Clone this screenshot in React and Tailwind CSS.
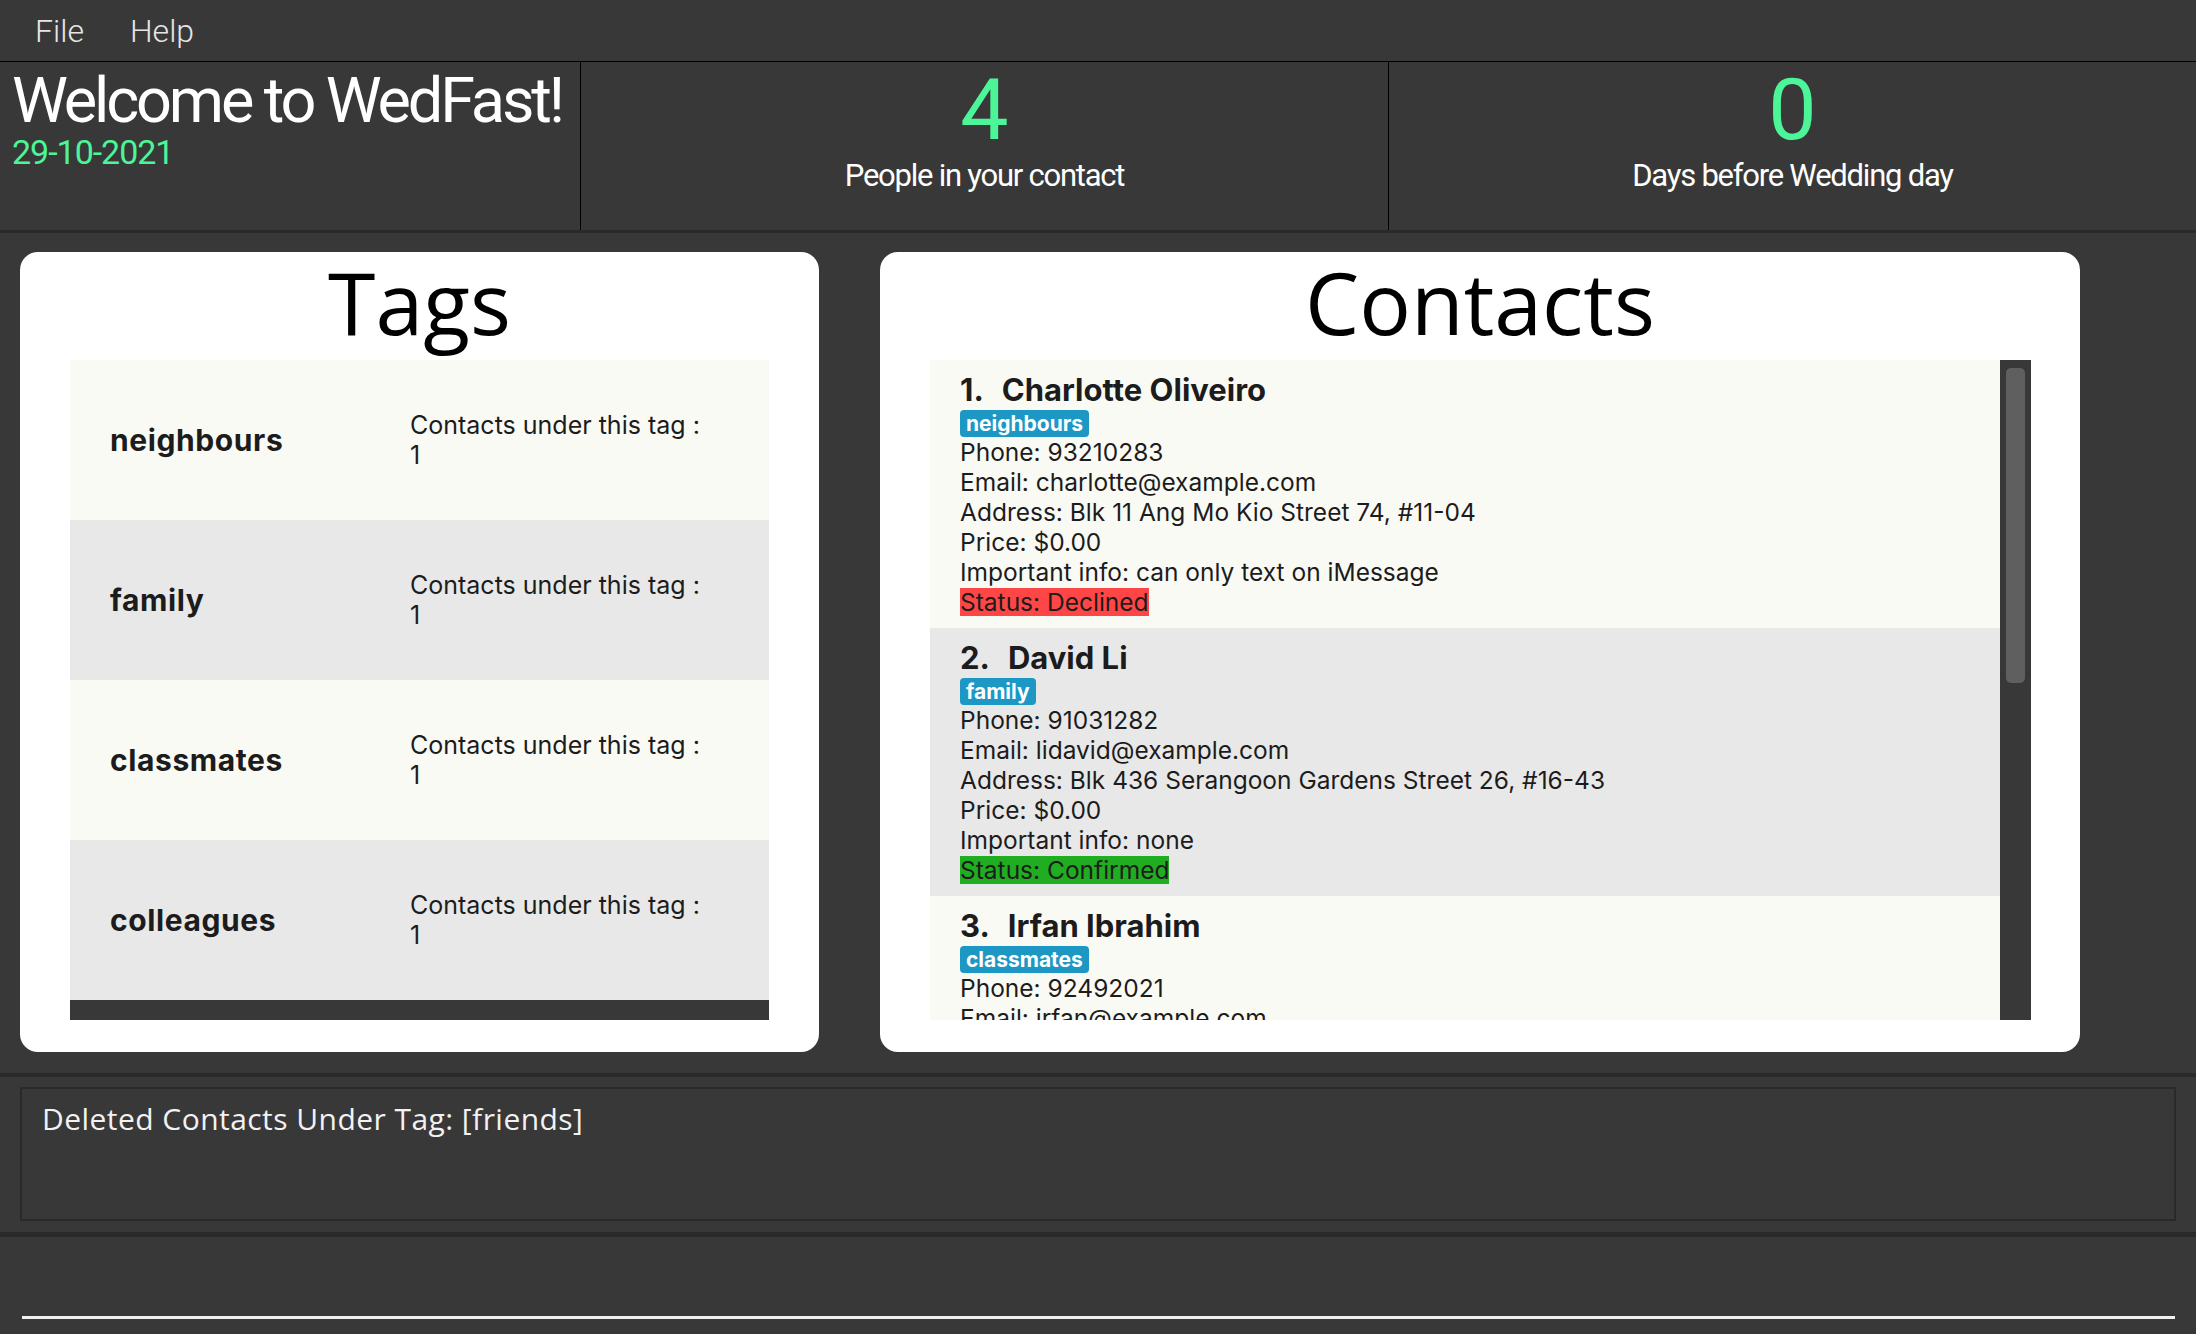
import React from "react";

const tags = ["neighbours", "family", "classmates", "colleagues"];

const contacts = [
  {
    name: "Charlotte Oliveiro",
    tag: "neighbours",
    phone: "93210283",
    email: "charlotte@example.com",
    address: "Blk 11 Ang Mo Kio Street 74, #11-04",
    info: "can only text on iMessage",
    status: "Declined",
  },
  {
    name: "David Li",
    tag: "family",
    phone: "91031282",
    email: "lidavid@example.com",
    address: "Blk 436 Serangoon Gardens Street 26, #16-43",
    info: "none",
    status: "Confirmed",
  },
  {
    name: "Irfan Ibrahim",
    tag: "classmates",
    phone: "92492021",
    email: "irfan@example.com",
    address: "Blk 47 Tampines Street 20, #17-35",
    info: "none",
    status: "Pending",
  },
];

const header = "font-['Roboto',sans-serif]";
const body = "font-['Inter','Open_Sans',sans-serif]";
const title = "font-['Open_Sans','Noto_Sans',sans-serif]";

function Stat({ value, label, last }) {
  return (
    <div
      className={
        "flex flex-col items-center " + (last ? "flex-1" : "w-[808px] border-r border-black")
      }
    >
      <div className="text-[86px] leading-[100px] -mt-[2px] text-[#4cf597]">{value}</div>
      <div className="text-[31px] leading-[40px] -mt-[4px] tracking-[-0.04em] text-white">{label}</div>
    </div>
  );
}

function TagRow({ name, index }) {
  return (
    <div
      className={
        "h-[160px] flex items-center shrink-0 " + (index % 2 === 0 ? "bg-[#fafaf5]" : "bg-[#e8e8e8]")
      }
    >
      <div className="w-[340px] pl-[40px] text-[30px] tracking-[0.02em] font-bold text-[#1c1c1c]">{name}</div>
      <div className="text-[25px] leading-[30px] text-[#1c1c1c]">
        <div>Contacts under this tag :</div>
        <div>1</div>
      </div>
    </div>
  );
}

function ContactRow({ c, index }) {
  const statusBg = c.status === "Declined" ? "bg-[#ff4646]" : c.status === "Confirmed" ? "bg-[#21ad21]" : "bg-[#f0c040]";
  return (
    <div
      className={
        "pl-[30px] pt-[12px] pb-[11px] shrink-0 " + (index % 2 === 0 ? "bg-[#fafaf5]" : "bg-[#e8e8e8]")
      }
    >
      <div className="text-[31px] leading-[36px] font-bold text-[#1c1c1c]">
        <span>{index + 1}.</span>
        <span className="ml-[18px]">{c.name}</span>
      </div>
      <div className="mt-[2px] flex">
        <span className="h-[27px] px-[6px] rounded-[4px] bg-[#1d97c4] text-white text-[21px] leading-[27px] font-bold">
          {c.tag}
        </span>
      </div>
      <div className="text-[24.5px] leading-[30px] text-[#1c1c1c]">
        <div>Phone: {c.phone}</div>
        <div>Email: {c.email}</div>
        <div>Address: {c.address}</div>
        <div>Price: $0.00</div>
        <div>Important info: {c.info}</div>
        <div>
          <span className={statusBg + " inline-block leading-[28px]"}>Status: {c.status}</span>
        </div>
      </div>
    </div>
  );
}

export default function App() {
  return (
    <div className="w-[2196px] h-[1334px] bg-[#383838] flex flex-col overflow-hidden">
      {/* menu bar */}
      <div className={"h-[62px] shrink-0 border-b border-black flex items-center gap-[46px] pl-[35px] text-[32px] font-light text-[#e6e6e6] " + header}>
        <span>File</span>
        <span>Help</span>
      </div>

      {/* header stats */}
      <div className={"h-[168px] shrink-0 flex " + header}>
        <div className="w-[581px] border-r border-black pl-[12px] pt-[4px]">
          <div className="text-[63px] leading-[70px] tracking-[-0.05em] text-white">Welcome to WedFast!</div>
          <div className="text-[34px] leading-[32px] tracking-[-0.03em] text-[#4cf597]">29-10-2021</div>
        </div>
        <Stat value="4" label="People in your contact" />
        <Stat value="0" label="Days before Wedding day" last />
      </div>
      <div className="h-[3px] shrink-0 bg-[#2a2a2a]" />

      {/* main panels */}
      <div className="h-[840px] shrink-0 flex pt-[19px] pl-[20px] gap-[61px]">
        <div className="w-[799px] h-[800px] bg-white rounded-[18px] flex flex-col">
          <div className={"h-[108px] pb-[10px] flex items-center justify-center text-[86px] text-black " + title}>Tags</div>
          <div className={"mx-[50px] h-[660px] flex flex-col bg-[#383838] " + body}>
            {tags.map((t, i) => (
              <TagRow key={t} name={t} index={i} />
            ))}
          </div>
        </div>

        <div className="w-[1200px] h-[800px] bg-white rounded-[18px] flex flex-col">
          <div className={"h-[108px] pb-[10px] flex items-center justify-center text-[86px] text-black " + title}>Contacts</div>
          <div className={"ml-[50px] w-[1101px] h-[660px] flex bg-[#383838] " + body}>
            <div className="w-[1070px] h-[660px] overflow-hidden flex flex-col bg-[#fafaf5]">
              {contacts.map((c, i) => (
                <ContactRow key={c.name} c={c} index={i} />
              ))}
            </div>
            <div className="flex-1 pt-[8px] flex justify-center">
              <div className="w-[19px] h-[315px] rounded-[5px] bg-[#5f5f5f]" />
            </div>
          </div>
        </div>
      </div>
      <div className="h-[4px] shrink-0 bg-[#2a2a2a]" />

      {/* result display */}
      <div className="h-[155px] shrink-0 pt-[10px] px-[20px]">
        <div className={"h-[134px] border-2 border-[#2a2a2a] px-[20px] pt-[7px] text-[30px] tracking-[0.015em] text-[#f2f2f2] " + title}>
          Deleted Contacts Under Tag: [friends]
        </div>
      </div>
      <div className="h-[5px] shrink-0 bg-[#2a2a2a]" />

      {/* command box */}
      <div className="flex-1 flex flex-col justify-end pb-[15px] px-[22px] pr-[21px]">
        <div className="h-[3px] bg-[#f0f0f0]" />
      </div>
    </div>
  );
}
